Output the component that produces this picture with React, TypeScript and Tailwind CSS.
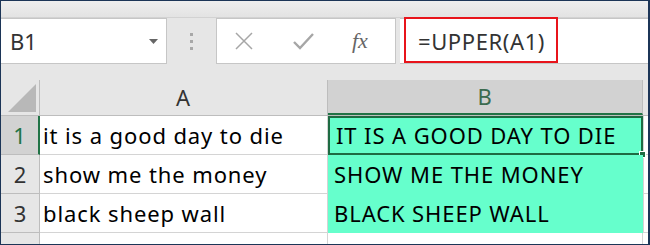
import React from "react";

const font = { fontFamily: '"Noto Sans", "Open Sans", sans-serif' };

export default function App() {
  return (
    <div
      className="w-[650px] h-[245px] bg-[#e6e6e6] border-l border-t border-b border-r-2 border-[#1c3557] overflow-hidden flex flex-col"
      style={font}
    >
      {/* top strip */}
      <div className="h-[17px] shrink-0 bg-gradient-to-b from-[#eeeeee] to-[#e3e3e3] border-b border-[#d2d2d2]" />
      {/* toolbar */}
      <div className="h-[46px] shrink-0 flex items-stretch">
        <div className="w-[166px] bg-white border-y border-r border-[#c6c6c6] flex items-center justify-between pl-[9px] pr-[8px]">
          <span className="text-[22px] text-[#333] leading-none">B1</span>
          <svg width="9" height="5" viewBox="0 0 9 5">
            <path d="M0 0 L9 0 L4.5 5 Z" fill="#666" />
          </svg>
        </div>
        <div className="w-[49px] flex flex-col items-center justify-center gap-[4px]">
          <div className="w-[3px] h-[3px] bg-[#a8a8a8]" />
          <div className="w-[3px] h-[3px] bg-[#a8a8a8]" />
          <div className="w-[3px] h-[3px] bg-[#a8a8a8]" />
        </div>
        <div className="w-[180px] bg-white border border-[#c6c6c6] flex items-center pl-[18px]">
          <svg width="18" height="18" viewBox="0 0 18 18">
            <path d="M1 1 L17 17 M17 1 L1 17" stroke="#a6a6a6" strokeWidth="1.5" fill="none" />
          </svg>
          <svg className="ml-[40px]" width="21" height="17" viewBox="0 0 21 17">
            <path d="M1 9 L7 15 L20 1" stroke="#a6a6a6" strokeWidth="2.4" fill="none" />
          </svg>
          <span
            className="ml-[38px] text-[22px] italic text-[#666] leading-none"
            style={{ fontFamily: '"Liberation Serif", serif' }}
          >
            fx
          </span>
        </div>
        <div className="w-[4px]" />
        <div className="flex-1 bg-white border-y border-[#c6c6c6] flex items-center relative">
          <div className="absolute left-[4px] top-[-2px] w-[154px] h-[46px] border-2 border-[#e8141b]" />
          <span className="ml-[18px] text-[22px] tracking-[0.6px] text-[#333] leading-none">=UPPER(A1)</span>
        </div>
      </div>
      <div className="h-[16px] shrink-0" />
      {/* grid */}
      <div className="flex-1 bg-white flex flex-col text-[22px] tracking-[0.9px] text-black">
        {/* header */}
        <div className="h-[36px] shrink-0 flex bg-[#e6e6e6] border-b border-[#bdbdbd]">
          <div className="w-[39px] relative border-r border-[#bdbdbd]">
            <svg className="absolute right-[3px] bottom-[3px]" width="28" height="28" viewBox="0 0 28 28">
              <path d="M28 0 L28 28 L0 28 Z" fill="#b8b8b8" />
            </svg>
          </div>
          <div className="w-[288px] border-r border-[#bdbdbd] flex items-center justify-center text-[#333]">A</div>
          <div className="w-[315px] bg-[#d2d2d2] border-r border-[#bdbdbd] flex items-center justify-center text-[#3b6b4f] border-b-2 border-b-[#217346]">B</div>
          <div className="flex-1" />
        </div>
        {[
          ["1", "it is a good day to die", "IT IS A GOOD DAY TO DIE", 38],
          ["2", "show me the money", "SHOW ME THE MONEY", 38],
          ["3", "black sheep wall", "BLACK SHEEP WALL", 38],
        ].map(([n, a, b, h], i) => (
          <div key={i} className="flex shrink-0" style={{ height: (h as number) + 1 }}>
            <div
              className={
                "w-[39px] flex items-center justify-center border-b border-[#bdbdbd] tracking-normal " +
                (i === 0
                  ? "bg-[#d2d2d2] text-[#217346] border-r-2 border-r-[#217346]"
                  : "bg-[#e6e6e6] text-[#333] border-r border-r-[#bdbdbd]")
              }
            >
              {n}
            </div>
            <div className="w-[288px] flex items-center pl-[3px] border-r border-b border-[#d4d4d4]">{a}</div>
            <div
              className={
                "w-[315px] flex items-center pl-[6px] bg-[#66ffcc] relative " +
                (i === 0 ? "border-2 border-[#1e6b43]" : "")
              }
            >
              {b}
              {i === 0 && (
                <div className="absolute right-[-5px] bottom-[-5px] w-[7px] h-[7px] bg-[#1e6b43] border border-white" />
              )}
            </div>
            <div className="flex-1 border-b border-[#d4d4d4] border-l border-l-[#d4d4d4]" />
          </div>
        ))}
        <div className="flex-1 flex">
          <div className="w-[39px] bg-[#e6e6e6] border-r border-[#bdbdbd]" />
          <div className="w-[288px] border-r border-[#d4d4d4]" />
          <div className="w-[315px] border-r border-[#d4d4d4]" />
        </div>
      </div>
    </div>
  );
}
